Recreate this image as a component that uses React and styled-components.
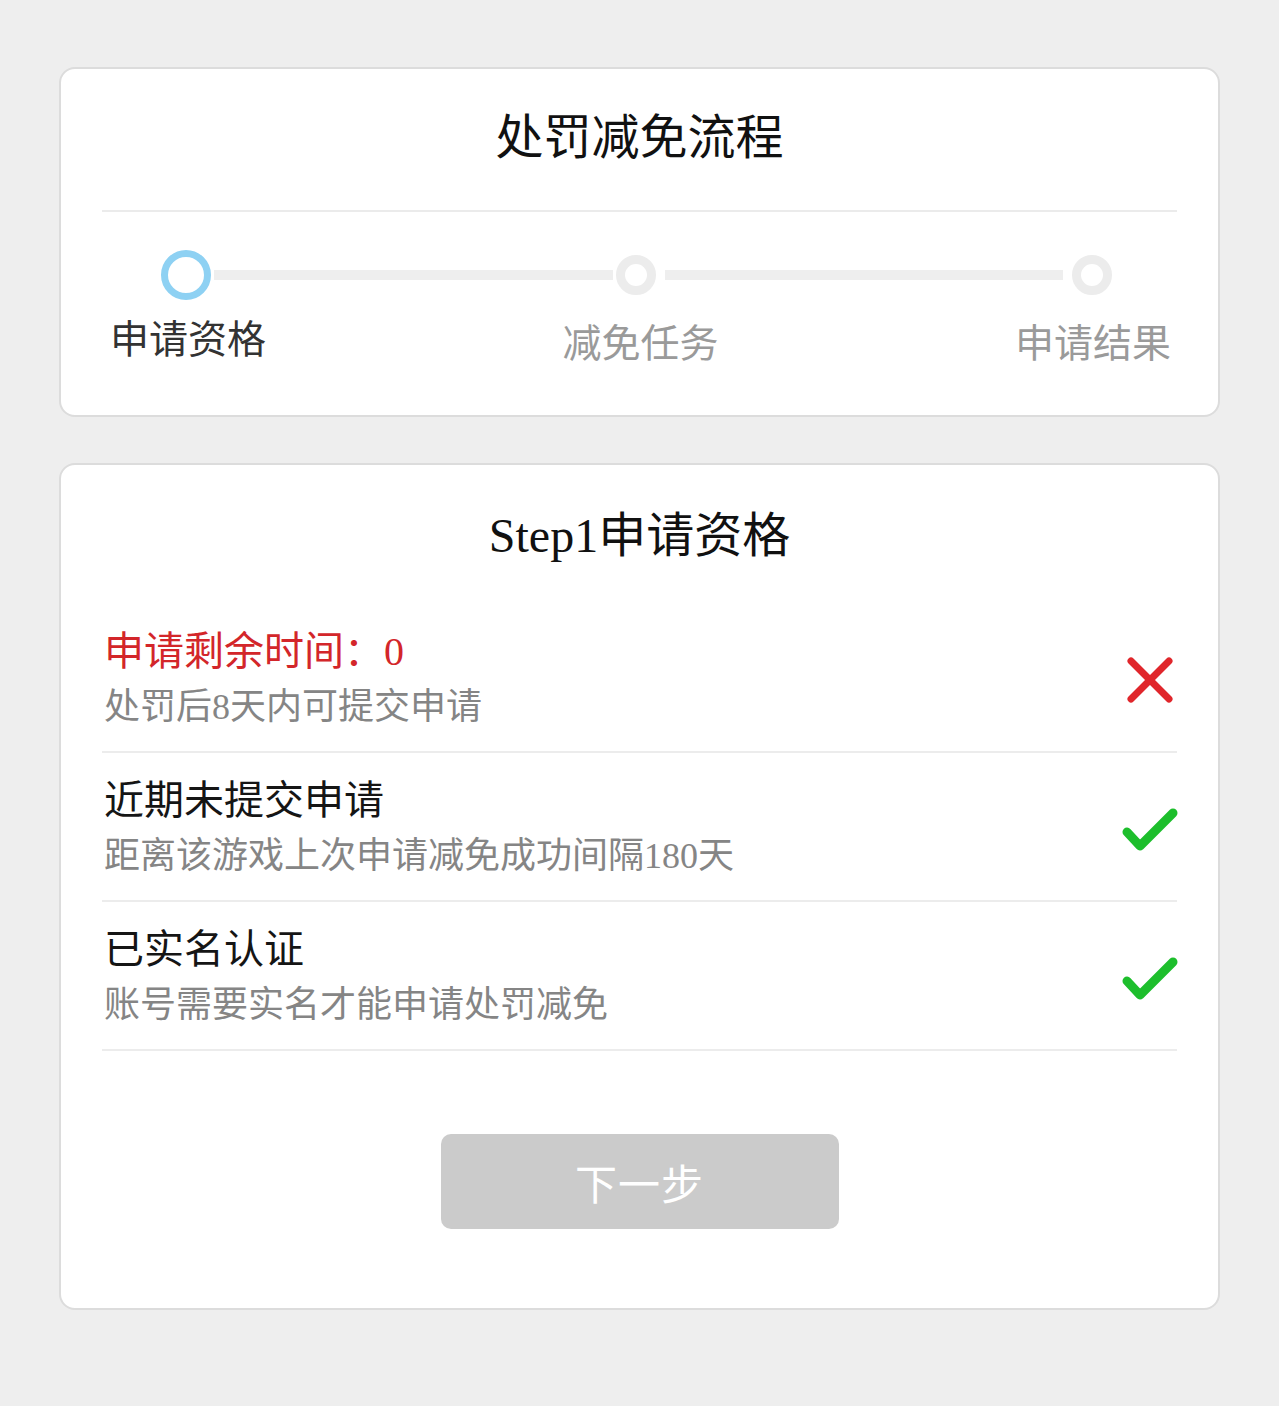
import React from 'react';
import styled, { createGlobalStyle } from 'styled-components';

const GlobalStyle = createGlobalStyle`
  html, body {
    margin: 0;
    padding: 0;
    background: #eeeeee;
  }
  body {
    font-family: "Liberation Serif", "Noto Sans CJK SC", serif;
    color: #111;
  }
`;

const Page = styled.div`
  padding: 67px 59px 96px;
  display: flex;
  flex-direction: column;
  gap: 46px;
`;

const Card = styled.section`
  background: #fff;
  border: 2px solid #dcdcdc;
  border-radius: 16px;
  padding: ${({ $pad }) => $pad};
`;

const CardTitle = styled.h1`
  margin: 0;
  font-weight: 400;
  font-size: 48px;
  line-height: 60px;
  text-align: center;
  color: #111;
`;

const Divider = styled.div`
  height: 2px;
  background: #ebebeb;
  margin-top: 42px;
`;

const Track = styled.div`
  display: flex;
  align-items: center;
  height: 50px;
  margin: 38px 65px 0 59px;
`;

const Dot = styled.span`
  box-sizing: border-box;
  flex: none;
  width: ${({ $active }) => ($active ? 50 : 40)}px;
  height: ${({ $active }) => ($active ? 50 : 40)}px;
  border-radius: 50%;
  border: ${({ $active }) => ($active ? '7px solid #8ed1f3' : '9px solid #ececec')};
  background: #fff;
`;

const Line = styled.span`
  flex: 1;
  height: 10px;
  margin: 0 ${({ $wide }) => ($wide ? 9 : 3)}px;
  background: #eeeeee;
`;

const Labels = styled.div`
  display: flex;
  justify-content: space-between;
  margin: 17px 6px 0 8px;
`;

const Label = styled.span`
  font-size: 39px;
  line-height: 50px;
  color: ${({ $active }) => ($active ? '#333' : '#9a9a9a')};
  transform: translateY(${({ $active }) => ($active ? -2 : 2)}px);
`;

const List = styled.div`
  margin-top: 38px;
`;

const Row = styled.div`
  display: flex;
  align-items: center;
  justify-content: space-between;
  padding: 24px 2px 20px 2px;
  border-bottom: 2px solid #ececec;
`;

const RowText = styled.div`
  display: flex;
  flex-direction: column;
  gap: 7px;
`;

const RowTitle = styled.div`
  font-size: 40px;
  line-height: 48px;
  color: ${({ $warn }) => ($warn ? '#d3262a' : '#151515')};
`;

const RowNote = styled.div`
  font-size: 36px;
  line-height: 48px;
  color: #858585;
`;

const Mark = styled.svg`
  flex: none;
  margin-right: ${({ $shift }) => $shift}px;
`;

const Footer = styled.div`
  display: flex;
  justify-content: center;
  padding-top: 83px;
`;

const NextButton = styled.button`
  width: 398px;
  height: 95px;
  border: none;
  border-radius: 10px;
  background: #cbcbcb;
  color: #fff;
  font-family: inherit;
  font-size: 42px;
  letter-spacing: 1px;
  cursor: not-allowed;
`;

const Cross = () => (
  <Mark $shift={2} width="46" height="46" viewBox="0 0 46 46">
    <g stroke="#e0262b" strokeWidth="7" strokeLinecap="round">
      <line x1="4" y1="4" x2="42" y2="42" />
      <line x1="42" y1="4" x2="4" y2="42" />
    </g>
  </Mark>
);

const Check = () => (
  <Mark $shift={-3} width="56" height="46" viewBox="0 0 56 46">
    <polyline
      points="5,26 18,40 51,7"
      fill="none"
      stroke="#1dbe2c"
      strokeWidth="9"
      strokeLinecap="round"
      strokeLinejoin="round"
    />
  </Mark>
);

const steps = ['申请资格', '减免任务', '申请结果'];

const checks = [
  { title: '申请剩余时间：0', note: '处罚后8天内可提交申请', ok: false },
  { title: '近期未提交申请', note: '距离该游戏上次申请减免成功间隔180天', ok: true },
  { title: '已实名认证', note: '账号需要实名才能申请处罚减免', ok: true },
];

export default function App() {
  const current = 0;
  return (
    <>
      <GlobalStyle />
      <Page>
        <Card $pad="39px 41px 48px">
          <CardTitle>处罚减免流程</CardTitle>
          <Divider />
          <Track>
            {steps.map((s, i) => (
              <React.Fragment key={s}>
                {i > 0 && <Line $wide={i > 1} />}
                <Dot $active={i === current} />
              </React.Fragment>
            ))}
          </Track>
          <Labels>
            {steps.map((s, i) => (
              <Label key={s} $active={i === current}>{s}</Label>
            ))}
          </Labels>
        </Card>

        <Card $pad="41px 41px 79px">
          <CardTitle>Step1申请资格</CardTitle>
          <List>
            {checks.map((c) => (
              <Row key={c.title}>
                <RowText>
                  <RowTitle $warn={!c.ok}>{c.title}</RowTitle>
                  <RowNote>{c.note}</RowNote>
                </RowText>
                {c.ok ? <Check /> : <Cross />}
              </Row>
            ))}
          </List>
          <Footer>
            <NextButton type="button" disabled>下一步</NextButton>
          </Footer>
        </Card>
      </Page>
    </>
  );
}
